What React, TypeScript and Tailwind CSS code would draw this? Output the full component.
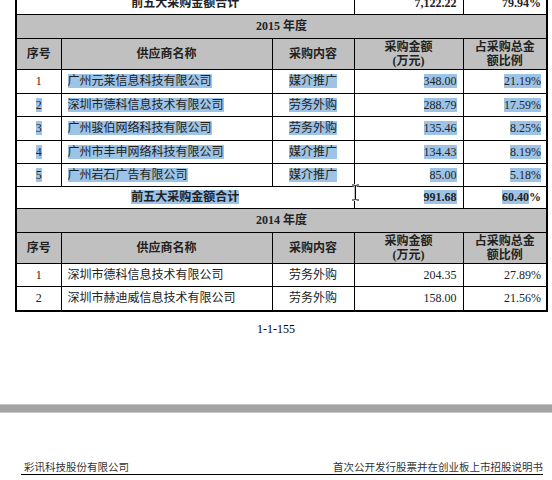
import React from 'react';

const rows2015 = [
  ['1', '广州元莱信息科技有限公司', '媒介推广', '348.00', '21.19%'],
  ['2', '深圳市德科信息技术有限公司', '劳务外购', '288.79', '17.59%'],
  ['3', '广州骏伯网络科技有限公司', '劳务外购', '135.46', '8.25%'],
  ['4', '广州市丰申网络科技有限公司', '媒介推广', '134.43', '8.19%'],
  ['5', '广州岩石广告有限公司', '媒介推广', '85.00', '5.18%'],
];

const rows2014 = [
  ['1', '深圳市德科信息技术有限公司', '劳务外购', '204.35', '27.89%'],
  ['2', '深圳市赫迪威信息技术有限公司', '劳务外购', '158.00', '21.56%'],
];

const heights2015 = ['h-[24px]', 'h-[23px]', 'h-[24px]', 'h-[23px]', 'h-[23px]'];
const heights2014 = ['h-[23px]', 'h-[24px]'];

function Hl({ children, on = true }: { children: React.ReactNode; on?: boolean }) {
  if (!on) return <>{children}</>;
  return <span className="inline-block bg-[#9dc3e6] leading-[14px]">{children}</span>;
}

const cell = 'border border-black p-0 align-middle';

function Header({ year }: { year: string }) {
  return (
    <>
      <tr className="h-[24px] bg-[#c0c0c0]">
        <td colSpan={5} className={`${cell} text-center font-bold`}>
          {year} 年度
        </td>
      </tr>
      <tr className="h-[31px] bg-[#c0c0c0] font-bold leading-[14px]">
        <td className={`${cell} text-center`}>序号</td>
        <td className={`${cell} text-center`}>供应商名称</td>
        <td className={`${cell} text-center`}>采购内容</td>
        <td className={`${cell} text-center`}>
          采购金额
          <br />
          (万元)
        </td>
        <td className={`${cell} text-center`}>
          占采购总金
          <br />
          额比例
        </td>
      </tr>
    </>
  );
}

function DataRow({ r, h, hl, red }: { r: string[]; h: string; hl: boolean; red?: boolean }) {
  return (
    <tr className={h}>
      <td className={`${cell} text-center ${red ? 'text-[#5a1414]' : ''}`}>
        <Hl on={hl && !red}>{r[0]}</Hl>
      </td>
      <td className={`${cell} pl-[6px]`}>
        <Hl on={hl}>{r[1]}</Hl>
      </td>
      <td className={`${cell} text-center`}>
        <Hl on={hl}>{r[2]}</Hl>
      </td>
      <td className={`${cell} text-right pr-[6px]`}>
        <Hl on={hl}>{r[3]}</Hl>
      </td>
      <td className={`${cell} text-right pr-[5px]`}>
        <Hl on={hl}>{r[4]}</Hl>
      </td>
    </tr>
  );
}

export default function App() {
  return (
    <div className="relative w-[552px] h-[480px] overflow-hidden bg-white text-[12px] text-[#222] font-['Liberation_Serif','Noto_Sans_CJK_SC',serif]">
      <div className="-mt-[10px] ml-[15px] w-[533px] border-2 border-black">
        <table className="w-full border-collapse border-hidden table-fixed">
          <colgroup>
            <col className="w-[44px]" />
            <col className="w-[211px]" />
            <col className="w-[82px]" />
            <col className="w-[109px]" />
            <col />
          </colgroup>
          <tbody>
            <tr className="h-[22px] font-bold">
              <td colSpan={3} className={`${cell} text-center`}>前五大采购金额合计</td>
              <td className={`${cell} text-right pr-[6px]`}>7,122.22</td>
              <td className={`${cell} text-right pr-[5px]`}>79.94%</td>
            </tr>
            <Header year="2015" />
            {rows2015.map((r, i) => (
              <DataRow key={r[0]} r={r} h={heights2015[i]} hl red={i === 0} />
            ))}
            <tr className="h-[22px] font-bold">
              <td colSpan={3} className={`${cell} text-center`}>
                <Hl>前五大采购金额合计</Hl>
              </td>
              <td className={`${cell} text-right pr-[6px]`}>
                <Hl>991.68</Hl>
              </td>
              <td className={`${cell} text-right pr-[5px]`}>
                <Hl>60.40</Hl>%
              </td>
            </tr>
            <Header year="2014" />
            {rows2014.map((r, i) => (
              <DataRow key={r[0]} r={r} h={heights2014[i]} hl={false} />
            ))}
          </tbody>
        </table>
      </div>

      <p className="mt-[10px] text-center leading-[14px] text-black">1-1-155</p>

      <div className="mt-[68px] h-[9px] bg-[#a3a3a3] border-y border-[#c6c6c6]" />

      <div className="ml-[21px] mr-[9px] mt-[48px] flex justify-between items-end border-b border-black pb-[1px] pl-[3px] text-[10.5px] leading-[12px] text-[#333] font-['Noto_Sans_CJK_SC',sans-serif]">
        <span>彩讯科技股份有限公司</span>
        <span>首次公开发行股票并在创业板上市招股说明书</span>
      </div>

      {/* text cursor */}
      <svg className="absolute left-[351px] top-[184px]" width="9" height="17" viewBox="0 0 9 17">
        <path d="M1 1 H3.5 L4.5 2 L5.5 1 H8 M4.5 2 V15 M1 16 H3.5 L4.5 15 L5.5 16 H8" fill="none" stroke="#fff" strokeWidth="2.5" />
        <path d="M1 1 H3.5 L4.5 2 L5.5 1 H8 M4.5 2 V15 M1 16 H3.5 L4.5 15 L5.5 16 H8" fill="none" stroke="#000" strokeWidth="1" />
      </svg>
    </div>
  );
}
